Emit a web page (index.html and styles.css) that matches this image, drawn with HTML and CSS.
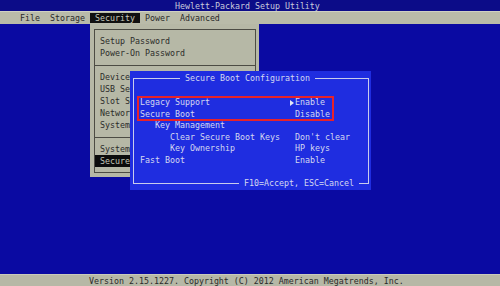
FILE: index.html
```html
<!DOCTYPE html>
<html lang="en">

<head>
    <meta charset="UTF-8">
    <meta name="viewport" content="width=device-width, initial-scale=1.0">
    <title>Hewlett-Packard Setup Utility</title>
    <link rel="stylesheet" href="styles.css">
</head>

<body>
    <div class="bios">
        <div class="title-bar">Hewlett-Packard Setup Utility</div>

        <div class="menu-bar">
            <span class="menu-item">File</span>
            <span class="menu-item">Storage</span>
            <span class="menu-item active">Security</span>
            <span class="menu-item">Power</span>
            <span class="menu-item">Advanced</span>
        </div>

        <div class="main">
            <!-- Security drop-down, partly hidden behind the dialog -->
            <div class="dropdown">
                <div class="dropdown-inner">
                    <div class="dd-item">Setup Password</div>
                    <div class="dd-item">Power-On Password</div>
                    <div class="dd-sep"></div>
                    <div class="dd-item">Device</div>
                    <div class="dd-item">USB Se</div>
                    <div class="dd-item">Slot S</div>
                    <div class="dd-item">Networ</div>
                    <div class="dd-item">System</div>
                    <div class="dd-sep"></div>
                    <div class="dd-item">System</div>
                    <div class="dd-item selected">Secure</div>
                </div>
            </div>

            <!-- Secure Boot Configuration dialog -->
            <div class="dialog">
                <div class="dialog-frame">
                    <div class="dialog-title">Secure Boot Configuration</div>
                    <div class="dialog-body">
                        <div class="highlight-group">
                            <div class="row">
                                <span class="label">Legacy Support</span>
                                <span class="marker on"></span>
                                <span class="value">Enable</span>
                            </div>
                            <div class="row">
                                <span class="label">Secure Boot</span>
                                <span class="marker"></span>
                                <span class="value">Disable</span>
                            </div>
                        </div>
                        <div class="row">
                            <span class="label indent-1">Key Management</span>
                        </div>
                        <div class="row">
                            <span class="label indent-2">Clear Secure Boot Keys</span>
                            <span class="marker"></span>
                            <span class="value">Don't clear</span>
                        </div>
                        <div class="row">
                            <span class="label indent-2">Key Ownership</span>
                            <span class="marker"></span>
                            <span class="value">HP keys</span>
                        </div>
                        <div class="row">
                            <span class="label">Fast Boot</span>
                            <span class="marker"></span>
                            <span class="value">Enable</span>
                        </div>
                    </div>
                    <div class="dialog-footer">F10=Accept, ESC=Cancel</div>
                </div>
            </div>
        </div>

        <div class="status-bar">Version 2.15.1227. Copyright (C) 2012 American Megatrends, Inc.</div>
    </div>
</body>

</html>
```

FILE: styles.css
```css
body {
    margin: 0;
    font-family: "DejaVu Sans Mono", "Liberation Mono", monospace;
    font-size: 8.3px;
    background-color: #0a0aa2;
}

.bios {
    width: 500px;
    height: 286px;
    display: flex;
    flex-direction: column;
    overflow: hidden;
}

.title-bar {
    height: 11px;
    line-height: 12px;
    background-color: #0c0c88;
    color: #c8cadc;
    padding-left: 175px;
    white-space: pre;
}

.menu-bar {
    height: 13px;
    display: flex;
    align-items: center;
    padding-left: 15px;
    background-color: #b9bba9;
    border-top: 1px solid #cfd1c2;
    box-sizing: border-box;
    color: #2a2a2a;
}

.menu-item {
    padding: 0 5px;
    line-height: 10px;
    height: 10px;
}

.menu-item.active {
    background-color: #101010;
    color: #c8cabc;
}

.main {
    flex: 1;
    position: relative;
    background-color: #0a0aa2;
}

.dropdown {
    position: absolute;
    left: 90px;
    top: 0;
    width: 169px;
    box-sizing: border-box;
    padding: 5px 3px 4px 4px;
    background-color: #b6b8a6;
    color: #2c2c2a;
}

.dropdown-inner {
    border: 1px solid #4c4c44;
    padding: 5px 0;
}

.dd-item {
    height: 12px;
    line-height: 12px;
    padding-left: 5px;
    white-space: pre;
    overflow: hidden;
}

.dd-item.selected {
    background-color: #0c0c0c;
    color: #c4c6b8;
}

.dd-sep {
    height: 1px;
    background-color: #4c4c44;
    margin: 6px 0 5px;
}

.dialog {
    position: absolute;
    left: 130px;
    top: 47px;
    width: 241px;
    box-sizing: border-box;
    padding: 7px 2px 6px 3px;
    background-color: #1f2de0;
    color: #d4d8f0;
}

.dialog-frame {
    border: 1px solid #c8ccec;
    display: flex;
    flex-direction: column;
}

.dialog-title {
    align-self: flex-start;
    margin: -7px 0 0 46px;
    padding: 0 5px;
    line-height: 12px;
    background-color: #1f2de0;
}

.dialog-body {
    margin-top: 13px;
    padding-left: 4px;
}

.highlight-group {
    width: 195px;
    outline: 2px solid #e8222a;
    outline-offset: -1px;
}

.row {
    display: flex;
    height: 11.6px;
    line-height: 11.6px;
    padding-left: 2px;
    white-space: pre;
}

.label {
    width: 150px;
    box-sizing: border-box;
}

.indent-1 {
    padding-left: 15px;
}

.indent-2 {
    padding-left: 30px;
}

.marker {
    width: 5px;
    display: flex;
    align-items: center;
}

.marker.on::before {
    content: "";
    border-left: 4px solid #e4e6f6;
    border-top: 3px solid transparent;
    border-bottom: 3px solid transparent;
}

.dialog-footer {
    align-self: flex-end;
    margin: 10px 9px -6px 0;
    padding: 0 5px;
    line-height: 12px;
    background-color: #1f2de0;
}

.status-bar {
    height: 12px;
    line-height: 13px;
    background-color: #b6b8a6;
    border-top: 1px solid #c9cbbb;
    box-sizing: border-box;
    color: #2a2a2a;
    padding-left: 89px;
    white-space: pre;
}
```
